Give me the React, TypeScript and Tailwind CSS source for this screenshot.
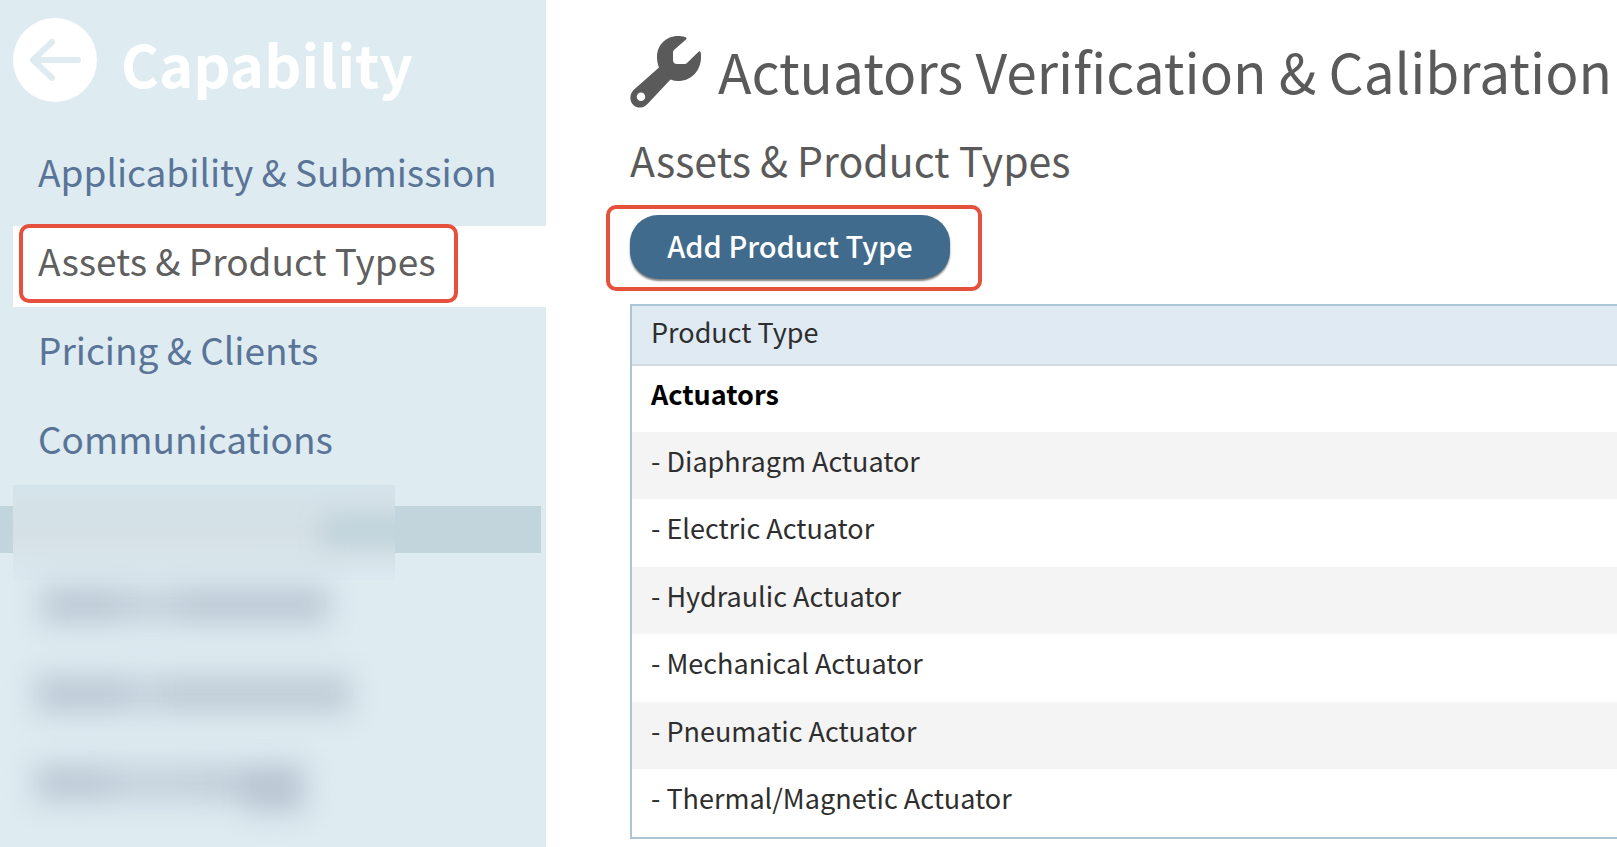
const navItems = [
    { label: 'Applicability & Submission', active: false },
    { label: 'Assets & Product Types', active: true },
    { label: 'Pricing & Clients', active: false },
    { label: 'Communications', active: false },
]

const productTypes = [
    'Diaphragm Actuator',
    'Electric Actuator',
    'Hydraulic Actuator',
    'Mechanical Actuator',
    'Pneumatic Actuator',
    'Thermal/Magnetic Actuator',
]

function BackIcon() {
    return (
        <svg viewBox="0 0 84 84" className="size-[84px]" aria-hidden="true">
            <circle cx="42" cy="42" r="42" fill="#fff" />
            <path d="M39 24 L20 42 L39 60 M21 42 H65" fill="none" stroke="#deebf1" strokeWidth="6" strokeLinecap="round" strokeLinejoin="round" />
        </svg>
    )
}

function WrenchIcon() {
    return (
        <svg viewBox="0 0 72 72" className="size-[72px] shrink-0" fill="#5a5a5a" fillRule="evenodd" aria-hidden="true">
            <path d="M56 3.500 C57.300 2.600 56.600 1.400 55 1 C52.500 0.200 50 0 48 0 C36 0 27 9 27 21 C27 25 27.700 28 29 31.500 L3.500 54 C0.500 57 0 61 0.600 64 C1.800 69 6 72 10.500 71.500 C13.500 71.300 15.500 70 17.500 68 L40.500 43.500 C43.500 44.700 46.500 45.200 49.500 45 C62 44.500 71 34 71 21 C71 18.500 71 17 70.500 16 C70 15 69 15.200 68.300 16 L57.500 26.500 C56.500 27.600 55.500 28 54 28 H47 C44.500 28 43 26.500 43 24 V17 C43 15.500 43.400 14.500 44.500 13.500 Z M11 56.500 A4.200 4.200 0 1 0 11 65 A4.200 4.200 0 1 0 11 56.500 Z" />
        </svg>
    )
}

function HiddenSection() {
    return (
        <div className="relative pt-[21px]" aria-hidden="true">
            <div className="mr-[5px] h-[47px] bg-[#c3d5dc]" />
            <div className="absolute top-0 left-[13px] h-[95px] w-[382px] overflow-hidden bg-linear-to-b from-[#d5e4eb] via-[#d4e0e5] to-[#dce9f0]">
                <div className="absolute top-[30px] left-[308px] h-8 w-[120px] bg-[#bfd2da] blur-md" />
            </div>
            <div className="relative ml-[13px] flex w-[352px] flex-col gap-[51px] pt-[33px] pb-[22px]">
                <div className="flex h-[38px] pl-7 blur-[14px]">
                    <div className="w-20 bg-[#bdcad5]" />
                    <div className="w-[60px] bg-[#c5d2dc]" />
                    <div className="w-[148px] bg-[#bdcad5]" />
                </div>
                <div className="flex h-[38px] pl-[22px] blur-[14px]">
                    <div className="w-[90px] bg-[#bdcad5]" />
                    <div className="w-10 bg-[#c5d2dc]" />
                    <div className="w-[186px] bg-[#bfccd6]" />
                </div>
                <div className="flex h-[38px] pl-[22px] blur-[14px]">
                    <div className="w-[76px] bg-[#bdcad5]" />
                    <div className="w-20 bg-[#c5d2dc]" />
                    <div className="w-[52px] bg-[#c2cfd9]" />
                    <div className="h-12 w-[62px] bg-[#b9c6d2]" />
                </div>
            </div>
        </div>
    )
}

function Sidebar() {
    return (
        <aside className="w-[546px] shrink-0 bg-[#deebf1]">
            <div className="flex items-start gap-6 pt-[18px] pl-[13px]">
                <button type="button" aria-label="Back" className="shrink-0">
                    <BackIcon />
                </button>
                <h2 className="text-[58px] leading-[90px] font-bold text-white">Capability</h2>
            </div>
            <nav className="mt-[29px] flex flex-col gap-2 pl-[13px]">
                {navItems.map((item) => (
                    <a
                        key={item.label}
                        href="#"
                        className={
                            item.active
                                ? 'relative bg-white pt-3 pb-[25px] pl-[25px] text-[37px] leading-[44px] text-[#5f5f5f]'
                                : 'relative pt-3 pb-[25px] pl-[25px] text-[37px] leading-[44px] text-[#5a7498]'
                        }
                    >
                        {item.label}
                        {item.active && <span className="absolute -top-0.5 left-1.5 h-[79px] w-[439px] rounded-[10px] border-4 border-[#e6513d]" />}
                    </a>
                ))}
            </nav>
            <HiddenSection />
        </aside>
    )
}

function ProductTable() {
    return (
        <table className="mt-[25px] w-full border-separate border-spacing-0 border-y-2 border-l-2 border-[#aac5d4] text-left text-[27px] text-[#2e2e2e]">
            <thead>
                <tr>
                    <th className="border-b-2 border-[#d3dade] bg-[#e0eaf3] pb-1.5 pl-[19px] leading-[52px] font-normal">Product Type</th>
                </tr>
            </thead>
            <tbody>
                <tr>
                    <td className="pb-2.5 pl-[19px] leading-[56px] font-bold text-black">Actuators</td>
                </tr>
                {productTypes.map((type) => (
                    <tr key={type} className="group even:bg-[#f4f4f4]">
                        <td className="pb-[9px] pl-[19px] leading-[58px] group-odd:pb-2.5">- {type}</td>
                    </tr>
                ))}
            </tbody>
        </table>
    )
}

export default function App() {
    return (
        <div className="flex min-h-screen overflow-hidden bg-white font-['Noto_Sans_CJK_SC',sans-serif]">
            <Sidebar />
            <main className="min-w-0 flex-1 pt-9 pl-[84px]">
                <div className="flex items-start gap-4">
                    <WrenchIcon />
                    <h1 className="text-[55px] leading-[68px] whitespace-nowrap text-[#5a5a5a]">Actuators Verification & Calibration</h1>
                </div>
                <h2 className="mt-[26px] text-[41px] leading-[50px] text-[#5a5a5a]">Assets & Product Types</h2>
                <div className="relative mt-[31px] w-fit">
                    <button type="button" className="h-16 w-[320px] rounded-[28px] bg-[#416b8c] pb-1 text-[29px] leading-[60px] font-medium text-white shadow-[0_2px_2px_rgba(0,0,0,0.5)]">
                        Add Product Type
                    </button>
                    <span className="pointer-events-none absolute -top-2.5 -right-8 -bottom-3 -left-6 rounded-[10px] border-4 border-[#e6513d]" />
                </div>
                <ProductTable />
            </main>
        </div>
    )
}
